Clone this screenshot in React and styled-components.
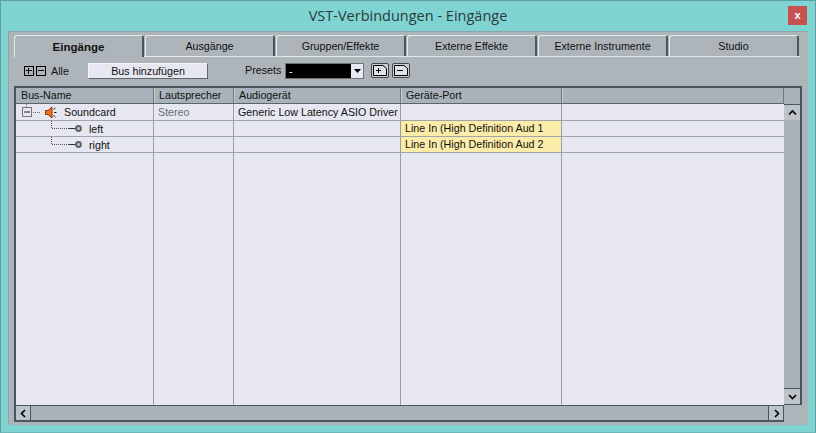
import React from "react";
import styled, { createGlobalStyle } from "styled-components";

const Global = createGlobalStyle`
  html, body { margin: 0; padding: 0; background: #7fd4d2; }
  #root { width: 816px; height: 433px; }
`;

const Win = styled.div`
  box-sizing: border-box; width: 816px; height: 433px;
  display: flex; flex-direction: column;
  background: #7fd4d2; border: 1px solid #5f9ea0; border-bottom-color: #6fb8b8;
  padding: 0 7px 7px;
  font-family: "Liberation Sans", Arial, sans-serif; font-size: 10.7px; color: #111;
`;
const TitleBar = styled.div`
  height: 30px; flex: none; display: flex; align-items: center; justify-content: center; position: relative;
`;
const Title = styled.div`
  font-family: "Open Sans", "Noto Sans", sans-serif; font-size: 14.5px; color: #2b3a3c; margin-top: -1px;
`;
const Close = styled.div`
  position: absolute; right: 1px; top: 5px; width: 19px; height: 19px; background: #c75050;
  display: flex; align-items: center; justify-content: center;
  color: #fff; font: bold 11px "Liberation Mono", monospace;
`;
const Panel = styled.div`
  flex: 1; min-height: 0; display: flex; flex-direction: column;
  background: #adb5bb; padding: 3px 6px 3px 5px;
  border: 1px solid #8fa6aa; border-right: 0; border-bottom: 0;
`;
const Tabs = styled.div`
  display: flex; height: 21px; flex: none; gap: 1px; border-bottom: 1px solid #e4e8ea; margin-right: 2px;
`;
const Tab = styled.div`
  width: 130px; flex: none; box-sizing: border-box; display: flex; align-items: center; justify-content: center;
  border-top: 1px solid #e6eaec; border-left: 1px solid #e6eaec; border-right: 2px solid #4d5558;
  border-radius: 3px 3px 0 0;
  ${p => p.$active && `font-weight: bold; font-size: 11.5px; height: 22px; margin-bottom: -1px; background: #adb5bb; position: relative;`}
`;
const ToolRow = styled.div`
  box-sizing: border-box; height: 29px; flex: none; display: flex; align-items: center; padding: 0 0 2px 10px;
`;
const SquareBtn = styled.div`
  box-sizing: border-box; width: 10px; height: 10px; border: 1px solid #000; position: relative; margin-right: 2px;
  &::before { content: ""; position: absolute; left: 1px; right: 1px; top: 3px; height: 1px; background: #000; }
  ${p => p.$plus && `&::after { content: ""; position: absolute; top: 1px; bottom: 1px; left: 3px; width: 1px; background: #000; }`}
`;
const Alle = styled.span`
  margin-left: 3px; width: 37px;
`;
const AddBtn = styled.div`
  box-sizing: border-box; width: 120px; height: 16px; background: #e6e7f0;
  border: 1px solid; border-color: #f4f5f8 #5f676b #5f676b #f4f5f8;
  display: flex; align-items: center; justify-content: center;
`;
const PresetLabel = styled.span` margin-left: 37px; width: 40px; margin-top: -1px; `;
const Select = styled.div`
  box-sizing: border-box; width: 79px; height: 16px; background: #000; color: #fff; border: 1px solid #6c7478;
  display: flex; align-items: center; justify-content: space-between; padding-left: 3px;
`;
const Arrow = styled.div`
  width: 12px; height: 14px; background: #e6e7f0; display: flex; align-items: center; justify-content: center;
`;
const FileBtn = styled.div`
  box-sizing: border-box; width: 18px; height: 15px; margin-left: ${p => p.$first ? 7 : 3}px; margin-top: -1px; background: #c8cdd6;
  border: 1px solid #3f4a4e; border-radius: 2px; display: flex; align-items: center; justify-content: center;
`;
const Table = styled.div`
  flex: 1; min-height: 0;
  display: grid; grid-template-columns: 1fr 18px; grid-template-rows: 1fr 17px;
`;
const cols = "138px 80px 167px 161px 1fr";
const Grid = styled.div`
  display: flex; flex-direction: column; min-width: 0; min-height: 0; background: #e6e7f0;
  border-left: 2px solid #47575d; border-top: 2px solid #47575d;
`;
const Header = styled.div`
  display: grid; grid-template-columns: ${cols}; height: 15px; background: #a9b2ba; flex: none;
  border-bottom: 1px solid #5a686e;
`;
const HCell = styled.div`
  box-sizing: border-box; padding-left: 4px; line-height: 15px; border-right: 1px solid #6c7a80; border-left: 1px solid #c6ccd0;
  &:first-child { border-left: 0; padding-left: 5px; }
`;
const Row = styled.div`
  display: grid; grid-template-columns: ${cols}; height: ${p => p.$h || 15}px; flex: none; border-bottom: 1px solid #a0a5a8;
`;
const Filler = styled(Row)` flex: 1; height: auto; border-bottom: 0; `;
const Cell = styled.div`
  box-sizing: border-box; border-right: 1px solid #9a9fa2; padding-left: 4px; line-height: 16px; white-space: nowrap; overflow: hidden;
  color: ${p => p.$dim ? "#666c70" : "#111"};
  ${p => p.$port && `background: #fbecaa; line-height: 15px;`}
  &:last-child { border-right: 0; }
`;
const Tree = styled.div`
  display: flex; align-items: center; height: ${p => p.$h || 15}px; padding-left: ${p => p.$indent || 0}px;
`;
const Label = styled.span`
  margin-left: ${p => p.$gap}px;
`;
const VBar = styled.div`
  display: flex; flex-direction: column; background: #a9b2ba;
  border: 2px solid #47575d; border-left: 0; border-bottom-width: 1px;
`;
const HBar = styled.div`
  display: flex; justify-content: space-between; background: #a9b2ba;
  border: 0 solid #47575d; border-left-width: 2px; border-top-width: 1px; border-bottom-width: 2px; border-right-width: 1px;
`;
const Corner = styled.div``;
const ScrollBtn = styled.div`
  box-sizing: border-box; width: ${p => p.$w}px; height: ${p => p.$h}px; flex: none;
  background: #bcc3c9; display: flex; align-items: center; justify-content: center;
  border: 0 solid #47575d;
  ${p => p.$side}: 1px solid #47575d;
  ${p => p.$push && "margin-top: auto;"}
`;
const VTop = styled.div` height: 16px; flex: none; background: #a9b2ba; `;

const Chev = ({ d }) => (
  <svg width="9" height="9" viewBox="0 0 9 9"><path d={d} fill="none" stroke="#000" strokeWidth="1.6" /></svg>
);

const Speaker = () => (
  <svg width="12" height="13" viewBox="0 0 12 13" style={{ flex: "none" }}>
    <path d="M0.5 4.5H3L7 1V12L3 8.5H0.5Z" fill="#f0701a" stroke="#7a2c06" strokeWidth="0.9" />
    <path d="M8.5 3.5l2-1.5M9 6.5H11.5M8.5 9.5l2 1.5" stroke="#222" strokeWidth="1" fill="none" />
  </svg>
);
const Collapse = () => (
  <svg width="23" height="16" viewBox="0 0 23 16" style={{ flex: "none" }}>
    <rect x="0.5" y="3.5" width="9" height="9" fill="#e6e7f0" stroke="#777" />
    <rect x="2" y="7.5" width="6" height="1" fill="#222" />
    <path d="M11 8.5H19" stroke="#666" strokeDasharray="1 1" />
    <path d="M4.5 0V3" stroke="#666" strokeDasharray="1 1" />
  </svg>
);
const Leaf = () => (
  <svg width="31" height="15" viewBox="0 0 31 15" style={{ flex: "none" }}>
    <path d="M0.5 0V7.5H18" stroke="#555" fill="none" strokeDasharray="1 1" />
    <path d="M18 7.5H25" stroke="#333" />
    <circle cx="27.5" cy="7.5" r="2.4" fill="#c8cdd0" stroke="#5d6468" strokeWidth="2" />
  </svg>
);

export default function App() {
  const names = ["Eingänge", "Ausgänge", "Gruppen/Effekte", "Externe Effekte", "Externe Instrumente", "Studio"];
  return (
    <Win>
      <Global />
      <TitleBar>
        <Title>VST-Verbindungen - Eingänge</Title>
        <Close>x</Close>
      </TitleBar>
      <Panel>
        <Tabs>
          {names.map((n, i) => <Tab key={n} $active={i === 0}>{n}</Tab>)}
        </Tabs>
        <ToolRow>
          <SquareBtn $plus /><SquareBtn />
          <Alle>Alle</Alle>
          <AddBtn>Bus hinzufügen</AddBtn>
          <PresetLabel>Presets</PresetLabel>
          <Select>-
            <Arrow><svg width="7" height="4" viewBox="0 0 7 4"><path d="M0 0H7L3.5 4Z" fill="#000" /></svg></Arrow>
          </Select>
          <FileBtn $first><svg width="14" height="11" viewBox="0 0 14 11"><path d="M0.5 .5H10L13.5 3.5V10.5H0.5Z M3 5.5H8M5.5 3V8" fill="#dfe2e8" stroke="#000" /></svg></FileBtn>
          <FileBtn><svg width="14" height="11" viewBox="0 0 14 11"><path d="M0.5 .5H10L13.5 3.5V10.5H0.5Z M3 5.5H9" fill="#dfe2e8" stroke="#000" /></svg></FileBtn>
        </ToolRow>
        <Table>
          <Grid>
            <Header>
              <HCell>Bus-Name</HCell><HCell>Lautsprecher</HCell><HCell>Audiogerät</HCell><HCell>Geräte-Port</HCell><HCell />
            </Header>
            <Row $h={16}>
              <Cell><Tree $indent={2} $h={16}><Collapse /><Speaker /><Label $gap={7}>Soundcard</Label></Tree></Cell>
              <Cell $dim>Stereo</Cell>
              <Cell>Generic Low Latency ASIO Driver</Cell>
              <Cell /><Cell />
            </Row>
            <Row>
              <Cell><Tree $indent={31}><Leaf /><Label $gap={7}>left</Label></Tree></Cell>
              <Cell /><Cell /><Cell $port>Line In (High Definition Aud 1</Cell><Cell />
            </Row>
            <Row>
              <Cell><Tree $indent={31}><Leaf /><Label $gap={7}>right</Label></Tree></Cell>
              <Cell /><Cell /><Cell $port>Line In (High Definition Aud 2</Cell><Cell />
            </Row>
            <Filler><Cell /><Cell /><Cell /><Cell /><Cell /></Filler>
          </Grid>
          <VBar>
            <VTop />
            <ScrollBtn $w={16} $h={16} $side="border-top"><Chev d="M1 6.5L4.5 3L8 6.5" /></ScrollBtn>
            <ScrollBtn $w={16} $h={16} $side="border-top" $push><Chev d="M1 3L4.5 6.5L8 3" /></ScrollBtn>
          </VBar>
          <HBar>
            <ScrollBtn $w={15} $h={14} $side="border-right"><Chev d="M6 1L2.5 4.5L6 8" /></ScrollBtn>
            <ScrollBtn $w={15} $h={14} $side="border-left"><Chev d="M3 1L6.5 4.5L3 8" /></ScrollBtn>
          </HBar>
          <Corner />
        </Table>
      </Panel>
    </Win>
  );
}
